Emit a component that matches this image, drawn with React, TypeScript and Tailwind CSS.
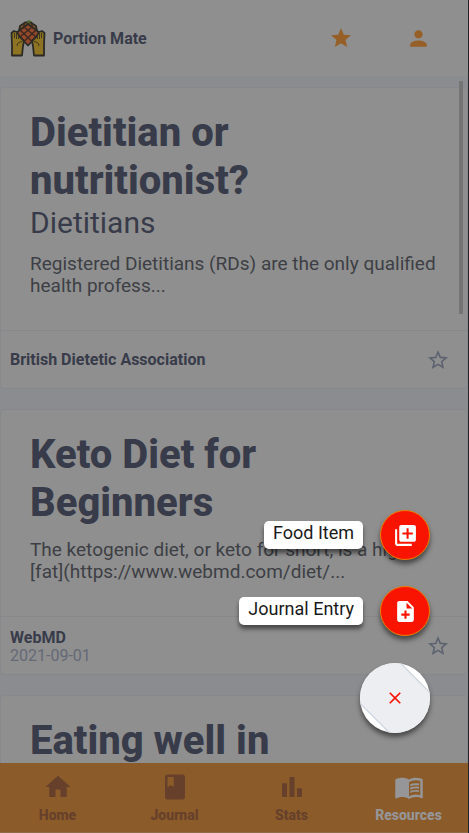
import React from "react";
import {
  MdBarChart,
  MdBook,
  MdClose,
  MdHome,
  MdLibraryAdd,
  MdMenuBook,
  MdNoteAdd,
  MdPerson,
  MdStar,
  MdStarBorder,
} from "react-icons/md";
import type { IconType } from "react-icons";

type Resource = {
  title: string;
  subtitle?: string;
  summary: string;
  source: string;
  date?: string;
};

const resources: Resource[] = [
  {
    title: "Dietitian or nutritionist?",
    subtitle: "Dietitians",
    summary: "Registered Dietitians (RDs) are the only qualified health profess...",
    source: "British Dietetic Association",
  },
  {
    title: "Keto Diet for Beginners",
    summary: "The ketogenic diet, or keto for short, is a high [fat](https://www.webmd.com/diet/...",
    source: "WebMD",
    date: "2021-09-01",
  },
  {
    title: "Eating well in",
    summary: "",
    source: "",
  },
];

const tabs: { label: string; Icon: IconType; active?: boolean }[] = [
  { label: "Home", Icon: MdHome },
  { label: "Journal", Icon: MdBook },
  { label: "Stats", Icon: MdBarChart },
  { label: "Resources", Icon: MdMenuBook, active: true },
];

const actions: { label: string; Icon: IconType }[] = [
  { label: "Food Item", Icon: MdLibraryAdd },
  { label: "Journal Entry", Icon: MdNoteAdd },
];

function Logo() {
  return (
    <svg viewBox="0 0 36 38" className="h-[38px] w-9" aria-hidden="true">
      <g stroke="#2b2a26" strokeWidth="1.800" strokeLinejoin="round">
        <path d="M9 12 L10 7 L13 5 L15 3.500 L21 3.500 L23 5 L26 7 L27 12 L18 20Z" fill="#8a5a24" />
        <path d="M18 5 L30 14 L18 26.500 L6 14Z" fill="#96482b" />
        <path d="M1.500 14 L4 12 L7 13 L10 18 L14 22 L13 27 L12 36.500 L2 36.500 L2 26 Z" fill="#8e7422" />
        <path d="M34.500 14 L32 12 L29 13 L26 18 L22 22 L23 27 L24 36.500 L34 36.500 L34 26 Z" fill="#8e7422" />
      </g>
      <path
        d="M14 4v4M22 4v4M14 8 L26 18 M10 11 L22 22.500 M22 8 L10 18 M26 11 L14 22.500"
        stroke="#3b2a22"
        strokeWidth="1.500"
        fill="none"
      />
      <path
        d="M4.500 14v5M6.500 14v6M8.500 16v4M31.500 14v5M29.500 14v6M27.500 16v4M7 27c0-3 2-4 5-4.500M29 27c0-3-2-4-5-4.500"
        stroke="#3a351f"
        strokeWidth="1"
        fill="none"
      />
      <path d="M17 4 L18 1 L22 2.500 L19 4Z" fill="#47672c" />
    </svg>
  );
}

function ResourceCard({ item }: { item: Resource }) {
  return (
    <article className="shrink-0 rounded border border-[#86888c] bg-[#8f8f8f]">
      <div className="px-[29px] pt-[21px] pb-[33px]">
        <h1 className="max-w-[300px] text-[40px] leading-[48px] font-extrabold">{item.title}</h1>
        {item.subtitle && <h2 className="text-[30px] leading-9">{item.subtitle}</h2>}
        <p className="mt-3 text-[19px] leading-[22px] text-[#3d3f45]">{item.summary}</p>
      </div>
      <footer className="flex h-[58px] items-center justify-between border-t border-[#86888c] pr-[17px] pl-[9px]">
        <div>
          <div className="text-base leading-5 font-bold">{item.source}</div>
          {item.date && <time className="block text-base leading-4 text-[#646976]">{item.date}</time>}
        </div>
        <button type="button" aria-label="Add to favourites" className="text-[#5d6270]">
          <MdStarBorder size={24} />
        </button>
      </footer>
    </article>
  );
}

export default function App() {
  return (
    <div className="relative flex h-screen flex-col overflow-hidden border-r border-[#232427] bg-[#8b8c8f] font-[Roboto,sans-serif] text-[#383b49]">
      <header className="flex h-[76px] shrink-0 items-center bg-[#8f8f8f] pr-[37px] pl-[10px]">
        <Logo />
        <span className="ml-[7px] flex-1 pt-0.5 text-base font-bold">Portion Mate</span>
        <div className="flex gap-[53px] text-[#965f27]">
          <button type="button" aria-label="Favourites">
            <MdStar size={24} />
          </button>
          <button type="button" aria-label="Profile">
            <MdPerson size={25} />
          </button>
        </div>
      </header>

      <main className="flex min-h-0 flex-1 flex-col gap-5 overflow-hidden pt-[11px]">
        {resources.map((item) => (
          <ResourceCard key={item.title} item={item} />
        ))}
      </main>

      <nav className="grid h-[70px] shrink-0 grid-cols-4 border-b border-[#8f6b45] bg-[#8b5b2a]">
        {tabs.map(({ label, Icon, active }) => (
          <a
            key={label}
            href="#"
            aria-current={active ? "page" : undefined}
            className={`flex flex-col items-center pt-[9px] pr-0.5 text-sm leading-5 font-extrabold ${
              active ? "text-[#969698]" : "text-[#66402a]"
            }`}
          >
            <Icon size={30} />
            <span className="mt-[3px]">{label}</span>
          </a>
        ))}
      </nav>

      <div className="absolute top-[81px] right-[5px] h-[233px] w-1 bg-[#747474]" />

      <div className="absolute right-[38px] bottom-[100px] flex flex-col items-end gap-[27px]">
        <div className="flex flex-col items-end gap-[26px]">
          {actions.map(({ label, Icon }) => (
            <button key={label} type="button" className="flex items-center gap-[17px]">
              <span className="h-7 rounded-[5px] bg-white px-[9px] text-lg leading-6 text-[#1a1a1a] shadow-[0_4px_4px_rgba(0,0,0,0.5)]">
                {label}
              </span>
              <span className="flex size-[50px] items-center justify-center rounded-full border border-[#f08000] bg-[#f81400] text-white shadow-[0_4px_5px_rgba(0,0,0,0.5)]">
                <Icon size={25} />
              </span>
            </button>
          ))}
        </div>
        <button
          type="button"
          aria-label="Close menu"
          className="flex size-[70px] items-center justify-center overflow-hidden rounded-full bg-white shadow-[0_4px_5px_rgba(0,0,0,0.5)]"
        >
          <span className="flex h-[58px] w-20 shrink-0 rotate-45 items-center justify-center border border-[#c9d0dc] bg-[#edeef2]">
            <MdClose size={20} className="rotate-45 text-[#f81400]" />
          </span>
        </button>
      </div>
    </div>
  );
}
